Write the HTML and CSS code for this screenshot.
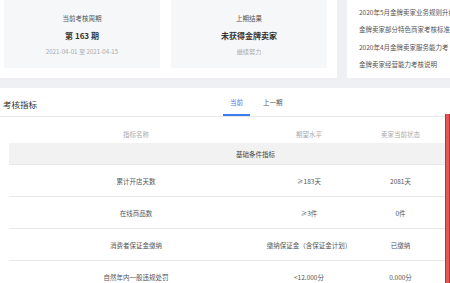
FILE: index.html
```html
<!DOCTYPE html>
<html lang="zh-CN">
<head>
    <meta charset="UTF-8">
    <meta name="viewport" content="width=device-width, initial-scale=1.0">
    <title>考核指标</title>
    <link rel="stylesheet" href="styles.css">
</head>
<body>
    <div class="top">
        <div class="summary">
            <div class="card">
                <div class="card-title">当前考核周期</div>
                <div class="card-value">第 163 期</div>
                <div class="card-note">2021-04-01 至 2021-04-15</div>
            </div>
            <div class="card">
                <div class="card-title">上期结果</div>
                <div class="card-value">未获得金牌卖家</div>
                <div class="card-note">继续努力</div>
            </div>
        </div>
        <div class="notices">
            <a href="#">2020年5月金牌卖家业务规则升级</a>
            <a href="#">金牌卖家部分特色商家考核标准</a>
            <a href="#">2020年4月金牌卖家服务能力考</a>
            <a href="#">金牌卖家经营能力考核说明</a>
        </div>
    </div>

    <div class="metrics">
        <div class="metrics-head">
            <div class="metrics-title">考核指标</div>
            <div class="tabs">
                <span class="tab active">当前</span>
                <span class="tab">上一期</span>
            </div>
        </div>
        <table class="metric-table">
            <thead>
                <tr>
                    <th class="col-name">指标名称</th>
                    <th class="col-expect">期望水平</th>
                    <th class="col-state">卖家当前状态</th>
                </tr>
            </thead>
            <tbody>
                <tr class="group">
                    <td colspan="3">基础条件指标</td>
                </tr>
                <tr>
                    <td>累计开店天数</td>
                    <td>≥183天</td>
                    <td>2081天</td>
                </tr>
                <tr>
                    <td>在线商品数</td>
                    <td>≥3件</td>
                    <td>0件</td>
                </tr>
                <tr>
                    <td>消费者保证金缴纳</td>
                    <td>缴纳保证金（含保证金计划）</td>
                    <td>已缴纳</td>
                </tr>
                <tr>
                    <td>自然年内一般违规处罚</td>
                    <td>&lt;12.000分</td>
                    <td>0.000分</td>
                </tr>
            </tbody>
        </table>
        <div class="mark"></div>
    </div>
</body>
</html>
```

FILE: styles.css
```css
body {
    margin: 0;
    height: 283px;
    background: #fff;
    font-family: "Noto Sans CJK SC", "Noto Sans", sans-serif;
    color: #555;
    overflow: hidden;
}
.top {
    display: flex;
    background: #eef0f4;
    padding-bottom: 10px;
}
.summary {
    width: 329px;
    height: 68px;
    padding: 0 4px 10px 4px;
    background: #fff;
    display: flex;
    gap: 11px;
}
.card {
    width: 156px;
    height: 68px;
    background: #f6f7f9;
    text-align: center;
    display: flex;
    flex-direction: column;
    align-items: center;
    padding-top: 13px;
    box-sizing: border-box;
}
.card-title {
    font-size: 6.5px;
    line-height: 10px;
    color: #555;
}
.card-value {
    font-size: 8px;
    font-weight: bold;
    line-height: 10px;
    margin-top: 8px;
    color: #333;
}
.card-note {
    font-size: 6.2px;
    line-height: 10px;
    margin-top: 6px;
    color: #aaa;
}
.notices {
    flex: 1;
    margin-left: 10px;
    background: #fff;
    padding: 4px 0 0 12px;
    display: flex;
    flex-direction: column;
    white-space: nowrap;
    overflow: hidden;
}
.notices a {
    font-size: 6.5px;
    line-height: 17.3px;
    color: #555;
    text-decoration: none;
}
.metrics {
    position: relative;
    background: #fff;
}
.metrics-head {
    display: flex;
    align-items: flex-end;
    height: 28px;
    border-bottom: 1px solid #e6e8eb;
}
.metrics-title {
    width: 220px;
    padding-left: 3px;
    font-size: 8.5px;
    line-height: 12px;
    color: #333;
    padding-bottom: 6px;
}
.tabs {
    display: flex;
    gap: 6px;
}
.tab {
    font-size: 6.5px;
    line-height: 10px;
    padding: 0 7px 7px 7px;
    color: #555;
    border-bottom: 2px solid transparent;
}
.tab.active {
    color: #3a7cf0;
    border-bottom-color: #3a7cf0;
}
.metric-table {
    margin-left: 9px;
    width: 437px;
    border-collapse: collapse;
    table-layout: fixed;
    text-align: center;
    font-size: 6.5px;
}
.metric-table th {
    font-weight: normal;
    color: #aaa;
    height: 26px;
    padding: 8px 0 0 0;
    box-sizing: border-box;
}
.col-name {
    width: 254px;
}
.col-expect {
    width: 92px;
}
.col-state {
    width: 91px;
}
.metric-table td {
    height: 31px;
    padding: 0;
    color: #555;
    border-bottom: 1px solid #e8e8e8;
}
.metric-table tr.group td {
    height: 21px;
    background: #f2f2f2;
    color: #444;
    padding-left: 56px;
}
.mark {
    position: absolute;
    right: 0;
    top: 26px;
    width: 3px;
    height: 200px;
    background: #e25858;
    border-left: 1px solid #c52a2e;
    border-right: 1px solid #c52a2e;
}
```
